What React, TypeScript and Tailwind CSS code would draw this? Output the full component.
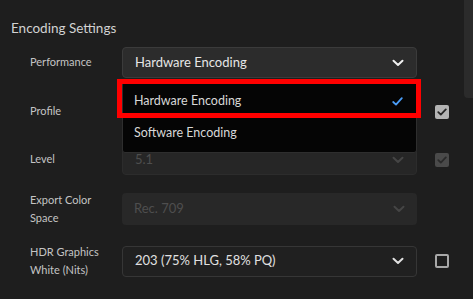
import React from 'react';

const Chevron = ({ color }: { color: string }) => (
  <svg width="12" height="8" viewBox="0 0 12 8" fill="none">
    <path d="M1.5 1.8 L6 6 L10.5 1.8" stroke={color} strokeWidth="2" strokeLinecap="round" strokeLinejoin="round" />
  </svg>
);

const CheckBox = ({ checked, disabled }: { checked: boolean; disabled?: boolean }) => {
  if (!checked) {
    return <div className="w-[14px] h-[14px] rounded-[2px] border-2 border-[#a8a8a8]" />;
  }
  return (
    <div
      className={`w-[14px] h-[14px] rounded-[2px] flex items-center justify-center ${
        disabled ? 'bg-[#4a4a4a]' : 'bg-[#b4b4b4]'
      }`}
    >
      <svg width="10" height="8" viewBox="0 0 10 8" fill="none">
        <path
          d="M1.3 4.2 L3.8 6.6 L8.8 1.4"
          stroke={disabled ? '#2a2a2a' : '#262626'}
          strokeWidth="1.8"
          strokeLinecap="round"
          strokeLinejoin="round"
        />
      </svg>
    </div>
  );
};

export default function App() {
  return (
    <div
      className="w-[473px] h-[299px] bg-[#1e1e1e] relative overflow-hidden"
      style={{ fontFamily: '"Lato", "Noto Sans", sans-serif' }}
    >
      {/* scrollbar */}
      <div className="absolute right-0 top-0 w-[9px] h-[98px] bg-[#2b2b2b] rounded-bl-[4px]" />

      <div className="pl-[11px] pt-[18px] text-[13.5px] leading-[20px] text-[#d2d2d2]">Encoding Settings</div>

      <div className="flex flex-col mt-[9px]">
        {/* Performance */}
        <div className="flex items-center h-[31px] relative z-10">
          <div className="w-[122px] pl-[30px] text-[11px] text-[#c4c4c4]">Performance</div>
          <div className="relative w-[295px]">
            <div className="h-[31px] rounded-[4px] bg-[#2c2c2c] border border-[#3b3b3b] flex items-center justify-between pl-[12px] pr-[12px]">
              <span className="text-[13px] text-[#e6e6e6]">Hardware Encoding</span>
              <Chevron color="#f0f0f0" />
            </div>
            {/* open menu */}
            <div className="absolute left-0 top-[32px] w-[295px] h-[74px] bg-[#050505] border border-[#2e2e2e] rounded-b-[3px] pt-[5px]">
              <div className="h-[32px] flex items-center justify-between pl-[11px] pr-[13px]">
                <span className="text-[12.5px] text-[#d8d8d8]">Hardware Encoding</span>
                <svg width="11" height="9" viewBox="0 0 11 9" fill="none">
                  <path d="M1.2 5 L4 7.6 L9.8 1.2" stroke="#4a9df8" strokeWidth="1.8" strokeLinecap="round" strokeLinejoin="round" />
                </svg>
              </div>
              <div className="h-[32px] flex items-center pl-[11px]">
                <span className="text-[12.5px] text-[#d8d8d8]">Software Encoding</span>
              </div>
            </div>
            <div className="absolute left-[-5px] top-[32px] w-[304px] h-[39px] border-[5px] border-[#ff0000]" />
          </div>
        </div>

        {/* Profile */}
        <div className="flex items-center h-[31px] mt-[18px]">
          <div className="w-[122px] pl-[30px] text-[11px] text-[#c4c4c4]">Profile</div>
          <div className="w-[295px] h-[31px] rounded-[4px] bg-[#2c2c2c]" />
          <div className="ml-[18px]">
            <CheckBox checked />
          </div>
        </div>

        {/* Level */}
        <div className="flex items-center h-[31px] mt-[17px]">
          <div className="w-[122px] pl-[30px] text-[11px] text-[#c4c4c4]">Level</div>
          <div className="w-[295px] h-[31px] rounded-[4px] bg-[#262626] border border-[#2c2c2c] flex items-center justify-between pl-[12px] pr-[12px]">
            <span className="text-[13px] text-[#4e4e4e]">5.1</span>
            <Chevron color="#454545" />
          </div>
          <div className="ml-[18px]">
            <CheckBox checked disabled />
          </div>
        </div>

        {/* Export Color Space */}
        <div className="flex items-center h-[36px] mt-[16px]">
          <div className="w-[122px] pl-[30px] text-[11px] leading-[18px] text-[#c4c4c4]">
            Export Color
            <br />
            Space
          </div>
          <div className="w-[295px] h-[32px] rounded-[4px] bg-[#282828] flex items-center justify-between pl-[12px] pr-[12px]">
            <span className="text-[13px] text-[#4e4e4e]">Rec. 709</span>
            <Chevron color="#454545" />
          </div>
        </div>

        {/* HDR Graphics White */}
        <div className="flex items-center h-[36px] mt-[16px]">
          <div className="w-[122px] pl-[30px] text-[11px] leading-[18px] text-[#c4c4c4]">
            HDR Graphics
            <br />
            White (Nits)
          </div>
          <div className="w-[295px] h-[31px] rounded-[4px] bg-[#202020] border border-[#363636] flex items-center justify-between pl-[12px] pr-[12px]">
            <span className="text-[13px] text-[#e0e0e0]">203 (75% HLG, 58% PQ)</span>
            <Chevron color="#e0e0e0" />
          </div>
          <div className="ml-[18px]">
            <CheckBox checked={false} />
          </div>
        </div>
      </div>
    </div>
  );
}
